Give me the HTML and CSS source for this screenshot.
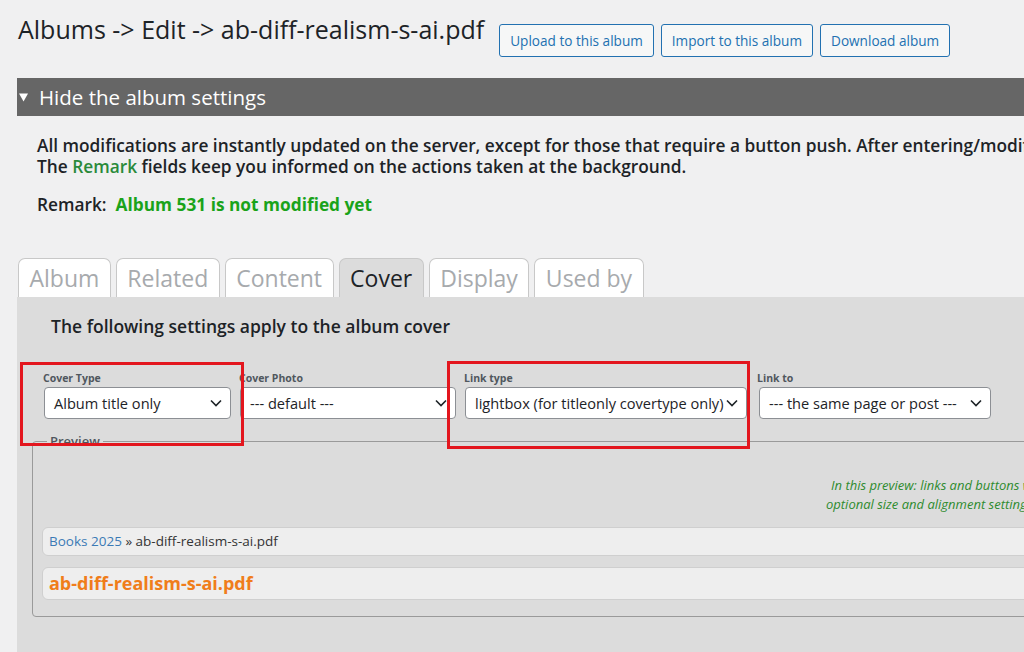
FILE: index.html
```html
<!DOCTYPE html>
<html>
<head>
<meta charset="utf-8">
<link rel="stylesheet" href="styles.css">
</head>
<body>
<div class="wrap">
  <div class="header">
    <h1 class="title">Albums -&gt; Edit -&gt; ab-diff-realism-s-ai.pdf</h1>
    <div class="actions">
      <button class="btn">Upload to this album</button>
      <button class="btn">Import to this album</button>
      <button class="btn">Download album</button>
    </div>
  </div>
  <div class="togglebar"><span class="tri"><svg width="9" height="9" viewBox="0 0 9 9"><path d="M0 0.5H9L4.5 8.5Z" fill="#fff"/></svg></span>Hide the album settings</div>
  <div class="intro">
    <p class="intro-text">All modifications are instantly updated on the server, except for those that require a button push. After entering/modifying text in a field, you must move focus away from the field.<br>The <span class="green">Remark</span> fields keep you informed on the actions taken at the background.</p>
    <p class="remark">Remark:&nbsp; <span class="remark-msg">Album 531 is not modified yet</span></p>
  </div>
  <div class="tabs">
    <div class="tab">Album</div>
    <div class="tab">Related</div>
    <div class="tab">Content</div>
    <div class="tab active">Cover</div>
    <div class="tab">Display</div>
    <div class="tab">Used by</div>
  </div>
  <div class="panel">
    <h2 class="panel-head">The following settings apply to the album cover</h2>
    <div class="fields">
      <div class="field f1">
        <label class="lbl">Cover Type</label>
        <div class="select">Album title only<span class="chev"><svg width="12" height="8" viewBox="0 0 12 8"><path d="M1 1.5 6 6.5 11 1.5" fill="none" stroke="#1d2327" stroke-width="1.6"/></svg></span></div>
      </div>
      <div class="field f2">
        <label class="lbl">Cover Photo</label>
        <div class="select">--- default ---<span class="chev"><svg width="12" height="8" viewBox="0 0 12 8"><path d="M1 1.5 6 6.5 11 1.5" fill="none" stroke="#1d2327" stroke-width="1.6"/></svg></span></div>
      </div>
      <div class="field f3">
        <label class="lbl">Link type</label>
        <div class="select">lightbox (for titleonly covertype only)<span class="chev"><svg width="12" height="8" viewBox="0 0 12 8"><path d="M1 1.5 6 6.5 11 1.5" fill="none" stroke="#1d2327" stroke-width="1.6"/></svg></span></div>
      </div>
      <div class="field f4">
        <label class="lbl">Link to</label>
        <div class="select">--- the same page or post ---<span class="chev"><svg width="12" height="8" viewBox="0 0 12 8"><path d="M1 1.5 6 6.5 11 1.5" fill="none" stroke="#1d2327" stroke-width="1.6"/></svg></span></div>
      </div>
    </div>
    <fieldset class="preview">
      <legend class="legend">Preview</legend>
      <div class="note">
        <span class="note-line first">In this preview: links and buttons work as in the real album,</span>
        <span class="note-line">optional size and alignment settings are ignored.</span>
      </div>
      <div class="crumb"><span class="crumb-link">Books 2025</span> &raquo; ab-diff-realism-s-ai.pdf</div>
      <div class="covertitle">ab-diff-realism-s-ai.pdf</div>
    </fieldset>
    <div class="mark mark1"></div>
    <div class="mark mark2"></div>
  </div>
</div>
</body>
</html>
```
FILE: styles.css
```css
html, body {
  margin: 0;
  padding: 0;
  overflow: hidden;
  background: #f0f0f1;
}
body {
  font-family: "Open Sans", "Noto Sans", sans-serif;
  color: #1d2327;
  width: 1024px;
  height: 652px;
}
.wrap {
  width: 1300px;
  padding-left: 17px;
}
.header {
  display: flex;
  align-items: flex-start;
  padding-top: 13px;
  height: 65px;
  box-sizing: border-box;
}
.title {
  margin: 0 0 0 1px;
  font-size: 25px;
  font-weight: 400;
  line-height: 32px;
}
.actions {
  display: flex;
  gap: 7px;
  margin-left: 15px;
  margin-top: 11px;
}
.btn {
  font-family: inherit;
  font-size: 13.6px;
  color: #2271b1;
  background: #f6f7f7;
  border: 1px solid #2271b1;
  border-radius: 3px;
  height: 33px;
  padding: 0 10px;
}
.togglebar {
  margin-top: 13px;
  height: 38px;
  line-height: 38px;
  background: #666666;
  color: #fff;
  font-size: 20.5px;
  display: flex;
  align-items: center;
}
.tri {
  width: 20px;
  padding-left: 2px;
  display: flex;
  align-items: center;
  margin-top: 1px;
}
.intro {
  padding: 19px 0 0 20px;
}
.intro-text {
  margin: 0;
  font-size: 17.3px;
  line-height: 21px;
  font-weight: 600;
  color: #1d2327;
  white-space: nowrap;
}
.green {
  color: #2a8a3a;
}
.remark {
  margin: 17px 0 0 0;
  font-size: 17.3px;
  line-height: 21px;
  font-weight: 600;
}
.remark-msg {
  color: #1aa31a;
  font-weight: 700;
}
.tabs {
  display: flex;
  gap: 5px;
  margin-top: 43px;
  padding-left: 1px;
  height: 39px;
}
.tab {
  height: 39px;
  box-sizing: border-box;
  padding: 0 10.5px;
  font-size: 23px;
  line-height: 39px;
  color: #a7aaad;
  background: #fff;
  border: 1px solid #c8c8c8;
  border-bottom: none;
  border-radius: 7px 7px 0 0;
}
.tab.active {
  background: #dcdcdc;
  color: #1d2327;
}
.panel {
  position: relative;
  background: #dcdcdc;
  height: 360px;
}
.panel-head {
  margin: 0;
  padding: 18px 0 0 34px;
  font-size: 17.5px;
  line-height: 22px;
  font-weight: 600;
}
.fields {
  display: flex;
  gap: 9px;
  padding: 34px 0 0 27px;
}
.field {
  display: flex;
  flex-direction: column;
}
.lbl {
  font-size: 10.5px;
  font-weight: 700;
  color: #50575e;
  line-height: 14px;
  height: 16px;
  margin-left: -1px;
}
.select {
  position: relative;
  height: 32px;
  box-sizing: border-box;
  background: #fff;
  border: 1px solid #8c8f94;
  border-radius: 4px;
  font-size: 14.6px;
  line-height: 30px;
  padding-left: 9px;
  white-space: nowrap;
}
.chev {
  position: absolute;
  right: 8px;
  top: 11px;
  line-height: 0;
}
.f1 .select { width: 187px; }
.f2 .select { width: 216px; }
.f3 .select { width: 282px; }
.f4 { margin-left: 3px; }
.f4 .select { width: 232px; }
.f4 .lbl { margin-left: -2px; }
.preview {
  margin: 16px 0 0 15px;
  width: 1150px;
  box-sizing: border-box;
  border: 1px solid #9a9a9a;
  border-radius: 4px;
  padding: 0 10px 16px 9px;
}
.legend {
  font-size: 13px;
  font-weight: 600;
  color: #50575e;
  padding: 0 3px;
  margin-left: 5px;
  line-height: 12px;
}
.note {
  padding-top: 29px;
  padding-left: 784px;
  font-size: 13px;
  line-height: 19px;
  font-style: italic;
  color: #2e8b2e;
  white-space: nowrap;
}
.note-line {
  display: block;
}
.note-line.first {
  padding-left: 5px;
}
.crumb {
  margin-top: 13px;
  height: 29px;
  box-sizing: border-box;
  background: #eeeeee;
  border: 1px solid #cfcfcf;
  border-radius: 6px;
  font-size: 13.5px;
  line-height: 27px;
  padding-left: 6px;
  color: #333;
}
.crumb-link {
  color: #3b7ab5;
}
.covertitle {
  margin-top: 11px;
  height: 33px;
  box-sizing: border-box;
  background: #eeeeee;
  border: 1px solid #cfcfcf;
  border-radius: 6px;
  font-size: 18px;
  font-weight: 700;
  line-height: 31px;
  padding-left: 6px;
  color: #f07d1a;
}
.mark {
  position: absolute;
  border: 3px solid #e3161e;
  box-sizing: border-box;
}
.mark1 {
  left: 3px;
  top: 65px;
  width: 224px;
  height: 84px;
}
.mark2 {
  left: 430px;
  top: 64px;
  width: 303px;
  height: 88px;
}
```
